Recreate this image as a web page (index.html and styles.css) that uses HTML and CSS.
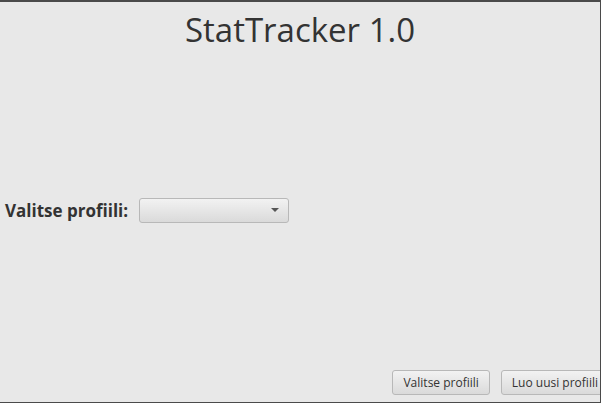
FILE: index.html
```html
<!DOCTYPE html>
<html>
<head>
<meta charset="utf-8">
<link rel="stylesheet" href="styles.css">
</head>
<body>
<div class="window">
  <header class="header">
    <h1 class="title">StatTracker 1.0</h1>
  </header>
  <main class="center">
    <label class="label">Valitse profiili:</label>
    <div class="combo"><span class="arrow"></span></div>
  </main>
  <footer class="footer">
    <button class="btn">Valitse profiili</button>
    <button class="btn">Luo uusi profiili</button>
  </footer>
  <span class="handle handle-top"></span>
  <span class="handle handle-bottom"></span>
  <span class="handle handle-right"></span>
  <span class="handle handle-corner"></span>
</div>
</body>
</html>
```
FILE: styles.css
```css
html, body {
  margin: 0;
  padding: 0;
  background: #e8e8e8;
}
.window {
  position: relative;
  box-sizing: border-box;
  width: 601px;
  height: 403px;
  background: #e8e8e8;
  border-top: 2px solid #4a4a4a;
  border-right: 1px solid #4a4a4a;
  border-bottom: 1px solid #4a4a4a;
  display: flex;
  flex-direction: column;
  font-family: "Open Sans", "Noto Sans", sans-serif;
  color: #333;
  overflow: hidden;
}
.header {
  height: 48px;
  display: flex;
  justify-content: center;
}
.title {
  margin: 0;
  padding-top: 8px;
  font-weight: 400;
  font-size: 33px;
  line-height: 40px;
  color: #333;
}
.center {
  flex: 1;
  display: flex;
  align-items: center;
  padding-left: 5px;
  gap: 11px;
}
.label {
  font-weight: 700;
  font-size: 17px;
  color: #333;
}
.combo {
  box-sizing: border-box;
  width: 150px;
  height: 25px;
  border: 1px solid #b8b8b8;
  border-radius: 3px;
  background: linear-gradient(#f2f2f2, #dadada);
  display: flex;
  align-items: center;
  justify-content: flex-end;
  padding-right: 9px;
}
.arrow {
  width: 0;
  height: 0;
  border-left: 4px solid transparent;
  border-right: 4px solid transparent;
  border-top: 4px solid #555;
}
.footer {
  display: flex;
  justify-content: flex-end;
  gap: 11px;
  padding-bottom: 7px;
  margin-right: -9px;
}
.btn {
  box-sizing: border-box;
  height: 25px;
  padding: 0 10px;
  border: 1px solid #b8b8b8;
  border-radius: 3px;
  background: linear-gradient(#f2f2f2, #dadada);
  font-family: "Open Sans", "Noto Sans", sans-serif;
  font-size: 12px;
  color: #333;
  flex-shrink: 0;
}
.handle {
  position: absolute;
  background: #3c8cf0;
}
.handle-top {
  top: -2px;
  left: 297px;
  width: 6px;
  height: 2px;
}
.handle-bottom {
  bottom: -1px;
  left: 297px;
  width: 6px;
  height: 1px;
}
.handle-right {
  right: -1px;
  top: 195px;
  width: 1px;
  height: 8px;
}
.handle-corner {
  right: -1px;
  top: -2px;
  width: 1px;
  height: 3px;
}
```
